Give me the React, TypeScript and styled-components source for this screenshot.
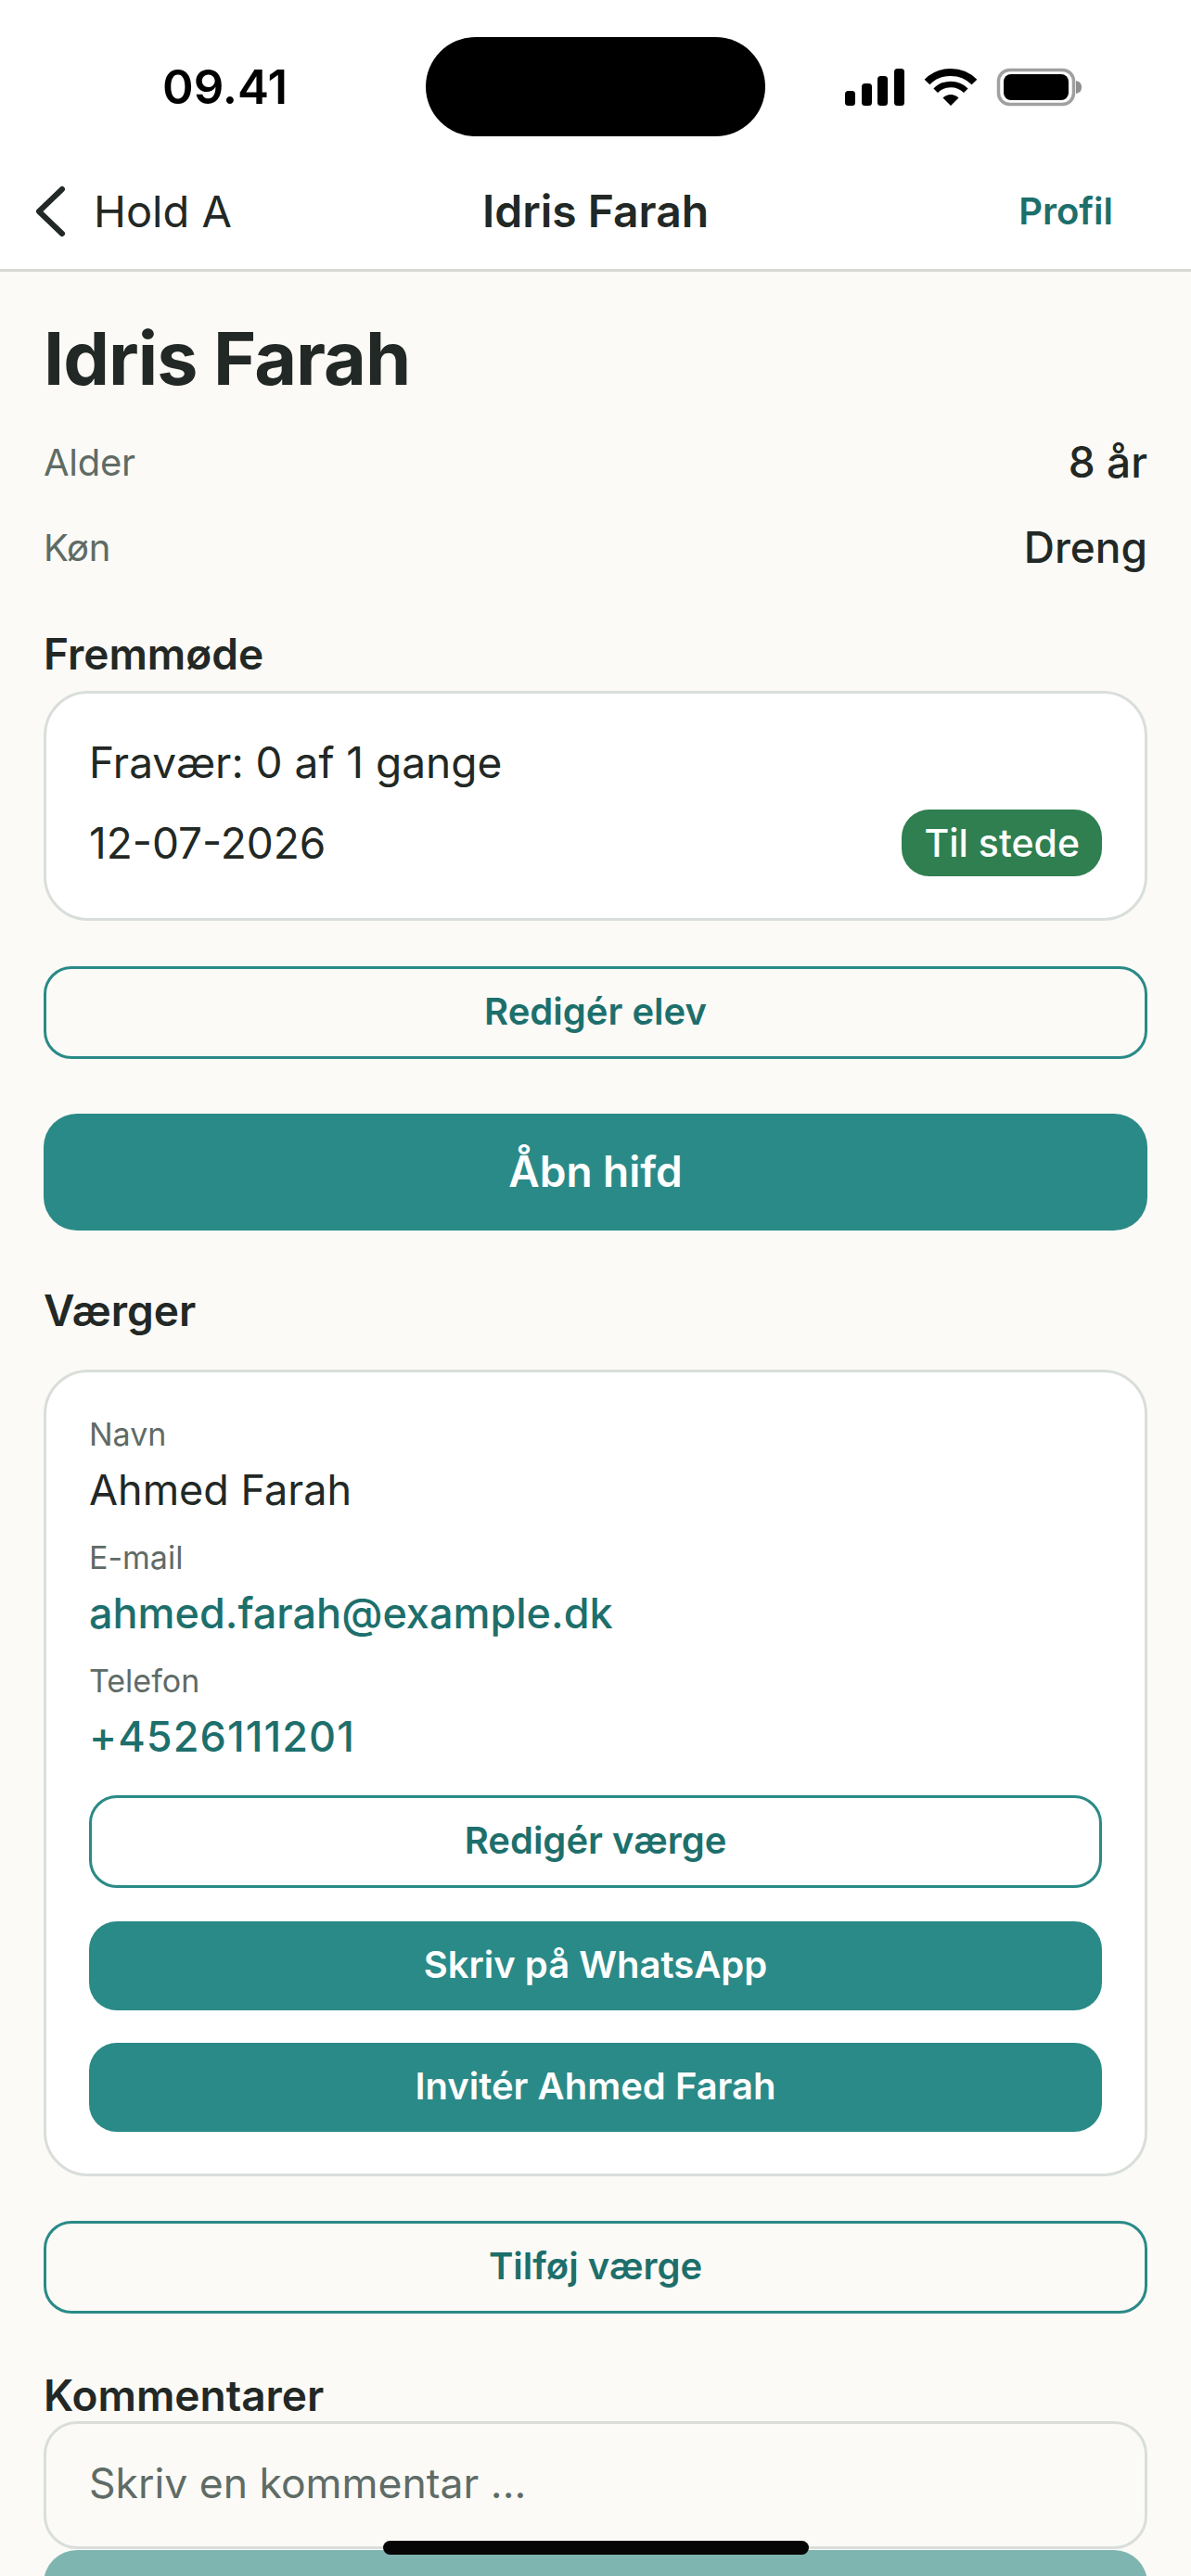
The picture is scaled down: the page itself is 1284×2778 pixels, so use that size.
import styled, { createGlobalStyle } from "styled-components"

const GlobalStyle = createGlobalStyle`
  html, body {
    margin: 0;
    padding: 0;
    background: #fbfaf6;
    font-family: Inter, "Noto Sans", sans-serif;
    color: #222825;
  }
  * { box-sizing: border-box; }
`

const Screen = styled.div`
  width: 1284px;
  height: 2778px;
  position: relative;
  overflow: hidden;
  background: #fbfaf6;
`

const Top = styled.header`
  background: #fff;
  border-bottom: 3px solid #d5d8d3;
  height: 293px;
`

const StatusBar = styled.div`
  height: 176px;
  display: flex;
  align-items: flex-start;
  padding-top: 40px;
`

const Time = styled.div`
  width: 459px;
  height: 107px;
  display: flex;
  align-items: center;
  padding-left: 175px;
  font-size: 51px;
  font-weight: 600;
  color: #000;
`

const Island = styled.div`
  width: 366px;
  height: 107px;
  border-radius: 54px;
  background: #000;
`

const StatusIcons = styled.div`
  height: 107px;
  display: flex;
  align-items: center;
  padding-left: 86px;
`

const NavBar = styled.nav`
  height: 103px;
  display: grid;
  grid-template-columns: 1fr auto 1fr;
  align-items: center;
  padding: 0 36px;
`

const BackLink = styled.div`
  display: flex;
  align-items: center;
  gap: 29px;
  font-size: 47px;
`

const NavTitle = styled.div`
  font-size: 48px;
  font-weight: 600;
`

const NavAction = styled.div`
  justify-self: end;
  margin-right: 48px;
  font-size: 40px;
  font-weight: 600;
  color: #1d6f6c;
`

const Content = styled.main`
  padding: 0 47px;
`

const Title = styled.h1`
  margin: 0 0 18px;
  padding-top: 45px;
  font-size: 79px;
  line-height: 96px;
  font-weight: 700;
  letter-spacing: -1px;
`

const InfoRow = styled.div`
  display: flex;
  justify-content: space-between;
  align-items: center;
  height: 92px;
`

const InfoLabel = styled.span`
  font-size: 40px;
  letter-spacing: -0.3px;
  color: #5f6b66;
`

const InfoValue = styled.span`
  font-size: 46px;
  font-weight: 500;
`

const SectionTitle = styled.h2<{ $top: number }>`
  margin: ${(p) => p.$top}px 0 0;
  font-size: 46px;
  line-height: 54px;
  font-weight: 600;
`

const Card = styled.section<{ $pad: string; $top: number }>`
  margin-top: ${(p) => p.$top}px;
  padding: ${(p) => p.$pad};
  background: #fff;
  border: 3px solid #d9dedb;
  border-radius: 48px;
`

const CardLine = styled.div<{ $top?: number }>`
  display: flex;
  justify-content: space-between;
  align-items: center;
  margin-top: ${(p) => p.$top ?? 0}px;
  font-size: 46px;
  height: 72px;
`

const Badge = styled.span`
  background: #2f7f50;
  color: #fff;
  font-size: 41px;
  font-weight: 500;
  height: 72px;
  padding: 0 24px;
  border-radius: 30px;
  display: flex;
  align-items: center;
`

const OutlineButton = styled.div<{ $top: number; $fill?: string }>`
  margin-top: ${(p) => p.$top}px;
  height: 100px;
  padding-bottom: 3px;
  display: flex;
  align-items: center;
  justify-content: center;
  border: 3px solid #2a8a87;
  border-radius: 30px;
  background: ${(p) => p.$fill ?? "transparent"};
  color: #1d6f6c;
  font-size: 40px;
  font-weight: 600;
`

const SolidButton = styled.div<{ $top: number; $height: number; $size: number; $radius: number }>`
  margin-top: ${(p) => p.$top}px;
  height: ${(p) => p.$height}px;
  padding-bottom: 3px;
  display: flex;
  align-items: center;
  justify-content: center;
  border-radius: ${(p) => p.$radius}px;
  background: #2a8a87;
  color: #fff;
  font-size: ${(p) => p.$size}px;
  font-weight: 600;
`

const FieldLabel = styled.div`
  font-size: 34px;
  line-height: 60px;
  height: 60px;
  color: #5f6b66;
`

const FieldValue = styled.div<{ $link?: boolean; $spaced?: boolean }>`
  font-size: 45px;
  line-height: 60px;
  height: 60px;
  margin-bottom: 13px;
  font-weight: ${(p) => (p.$link ? 500 : 400)};
  letter-spacing: ${(p) => (p.$spaced ? "1.1px" : "0")};
  color: ${(p) => (p.$link ? "#1d6f6c" : "#222825")};
`

const CommentBox = styled.div`
  margin-top: 1px;
  height: 138px;
  padding: 0 46px 5px;
  display: flex;
  align-items: center;
  border: 3px solid #d9dedb;
  border-radius: 36px;
  font-size: 44.5px;
  color: #5f6b66;
`

const SendButton = styled.div`
  margin-top: 1px;
  height: 126px;
  border-radius: 36px;
  background: #7fb5b1;
`

const HomeIndicator = styled.div`
  position: absolute;
  left: 413px;
  top: 2740px;
  width: 459px;
  height: 15px;
  border-radius: 8px;
  background: #060606;
`

const StatusGlyphs = () => (
  <svg width="256" height="42" viewBox="0 0 256 42">
    <rect x="0" y="25" width="11" height="16" rx="3.5" fill="#000" />
    <rect x="18" y="17" width="11" height="24" rx="3.5" fill="#000" />
    <rect x="35" y="9" width="11" height="32" rx="3.5" fill="#000" />
    <rect x="53" y="1" width="11" height="40" rx="3.5" fill="#000" />
    <path d="M88.5 15.5A36 36 0 0 1 139.5 15.5" stroke="#000" strokeWidth="8" fill="none" />
    <path d="M97.7 24.7A23 23 0 0 1 130.3 24.7" stroke="#000" strokeWidth="6.5" fill="none" />
    <path d="M105.5 32.5A12 12 0 0 1 122.5 32.5L114 41z" fill="#000" />
    <rect x="165.5" y="2.5" width="81" height="37" rx="12" fill="none" stroke="#a0a0a0" strokeWidth="3.5" />
    <rect x="171" y="7" width="70" height="28" rx="8" fill="#000" />
    <path d="M249 14c4 1 6 3 6 7s-2 6-6 7z" fill="#8f8f8f" />
  </svg>
)

const BackChevron = () => (
  <svg width="36" height="60" viewBox="0 0 36 60">
    <path d="M31 6 6 30l25 24" fill="none" stroke="#222825" strokeWidth="6" strokeLinecap="round" strokeLinejoin="round" />
  </svg>
)

export default function App() {
  return (
    <Screen>
      <GlobalStyle />
      <Top>
        <StatusBar>
          <Time>09.41</Time>
          <Island />
          <StatusIcons>
            <StatusGlyphs />
          </StatusIcons>
        </StatusBar>
        <NavBar>
          <BackLink>
            <BackChevron />
            Hold A
          </BackLink>
          <NavTitle>Idris Farah</NavTitle>
          <NavAction>Profil</NavAction>
        </NavBar>
      </Top>
      <Content>
        <Title>Idris Farah</Title>
        <InfoRow>
          <InfoLabel>Alder</InfoLabel>
          <InfoValue>8 år</InfoValue>
        </InfoRow>
        <InfoRow>
          <InfoLabel>Køn</InfoLabel>
          <InfoValue>Dreng</InfoValue>
        </InfoRow>
        <SectionTitle $top={42}>Fremmøde</SectionTitle>
        <Card $top={13} $pad="38px 46px 45px">
          <CardLine>Fravær: 0 af 1 gange</CardLine>
          <CardLine $top={15}>
            12-07-2026
            <Badge>Til stede</Badge>
          </CardLine>
        </Card>
        <OutlineButton $top={49}>Redigér elev</OutlineButton>
        <SolidButton $top={59} $height={126} $size={46} $radius={36}>
          Åbn hifd
        </SolidButton>
        <SectionTitle $top={59}>Værger</SectionTitle>
        <Card $top={37} $pad="37px 46px 45px">
          <FieldLabel>Navn</FieldLabel>
          <FieldValue>Ahmed Farah</FieldValue>
          <FieldLabel>E-mail</FieldLabel>
          <FieldValue $link>ahmed.farah@example.dk</FieldValue>
          <FieldLabel>Telefon</FieldLabel>
          <FieldValue $link $spaced>+4526111201</FieldValue>
          <OutlineButton $top={33} $fill="#fff">
            Redigér værge
          </OutlineButton>
          <SolidButton $top={36} $height={96} $size={40} $radius={30}>
            Skriv på WhatsApp
          </SolidButton>
          <SolidButton $top={35} $height={96} $size={40} $radius={30}>
            Invitér Ahmed Farah
          </SolidButton>
        </Card>
        <OutlineButton $top={48}>Tilføj værge</OutlineButton>
        <SectionTitle $top={61}>Kommentarer</SectionTitle>
        <CommentBox>Skriv en kommentar ...</CommentBox>
        <SendButton />
      </Content>
      <HomeIndicator />
    </Screen>
  )
}
